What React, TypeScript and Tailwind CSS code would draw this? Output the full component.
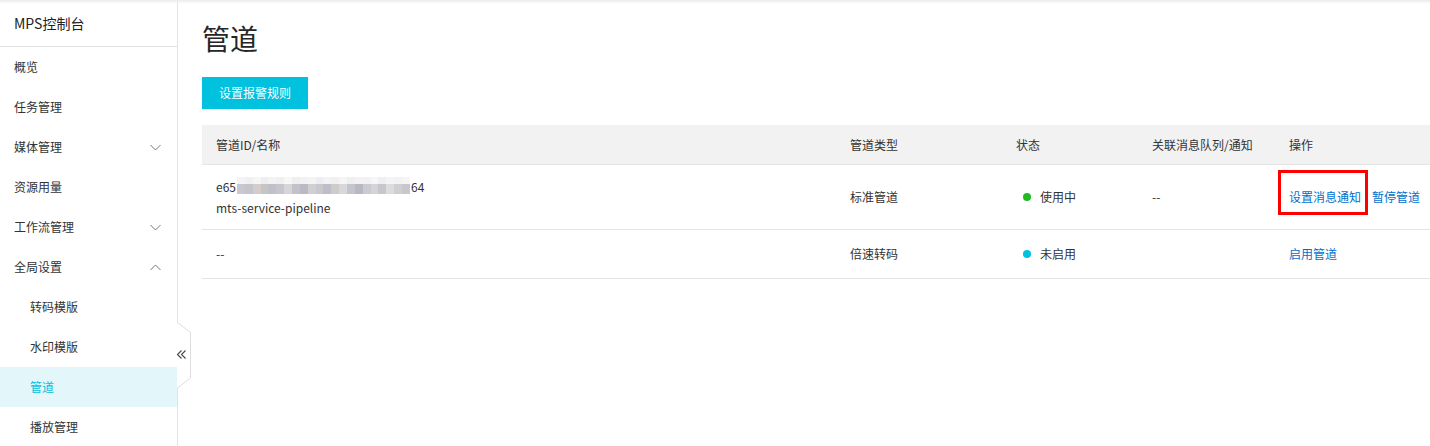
import React from "react";

const FONT = { fontFamily: '"Noto Sans CJK SC", "Noto Sans", sans-serif' };

function Chevron({ up }: { up?: boolean }) {
  return (
    <svg width="11" height="7" viewBox="0 0 11 7" className="text-[#777]">
      {up ? (
        <polyline points="0.5,6 5.5,1 10.5,6" fill="none" stroke="currentColor" strokeWidth="1" />
      ) : (
        <polyline points="0.5,1 5.5,6 10.5,1" fill="none" stroke="currentColor" strokeWidth="1" />
      )}
    </svg>
  );
}

type MenuItem = { label: string; sub?: boolean; chevron?: "up" | "down"; active?: boolean };

const menu: MenuItem[] = [
  { label: "概览" },
  { label: "任务管理" },
  { label: "媒体管理", chevron: "down" },
  { label: "资源用量" },
  { label: "工作流管理", chevron: "down" },
  { label: "全局设置", chevron: "up" },
  { label: "转码模版", sub: true },
  { label: "水印模版", sub: true },
  { label: "管道", sub: true, active: true },
  { label: "播放管理", sub: true },
];

const topBlocks = [
  "bg-[#f4f4f6]", "bg-[#f0f0f2]", "bg-[#f6f4f4]", "bg-[#eeeef1]", "bg-[#f3f3f3]", "bg-[#f0eff2]",
  "bg-[#f7f7f7]", "bg-[#efeff1]", "bg-[#f2f2f4]", "bg-[#f5f3f4]", "bg-[#eeeef0]", "bg-[#f3f3f5]",
  "bg-[#f0f0f0]", "bg-[#f5f5f7]", "bg-[#efeff2]", "bg-[#f3f1f1]", "bg-[#f1f1f3]", "bg-[#f6f6f6]",
  "bg-[#efeff1]", "bg-[#f4f4f4]", "bg-[#f2f2f4]", "bg-[#f5f5f5]",
];
const bottomBlocks = [
  "bg-[#c8c8d0]", "bg-[#c4c4cc]", "bg-[#d2cccc]", "bg-[#c9c4c4]", "bg-[#bfc0c8]", "bg-[#c6c6ce]",
  "bg-[#d6d6d8]", "bg-[#c2c2ca]", "bg-[#b9bac4]", "bg-[#d0d0d4]", "bg-[#c8c8ce]", "bg-[#bebec8]",
  "bg-[#cfcacb]", "bg-[#d8d8dc]", "bg-[#c4c4cc]", "bg-[#b8b8c2]", "bg-[#cacad0]", "bg-[#d4d4d6]",
  "bg-[#c6c6cc]", "bg-[#dcdcdc]", "bg-[#cfcfd3]", "bg-[#c8c8cc]",
];

function Blur() {
  return (
    <div className="flex flex-col w-[173px] h-[17px] -mt-[3px] mx-[1px]">
      <div className="flex h-[7px]">
        {topBlocks.map((c, i) => (
          <div key={i} className={`flex-1 ${c}`} />
        ))}
      </div>
      <div className="flex h-[10px]">
        {bottomBlocks.map((c, i) => (
          <div key={i} className={`flex-1 ${c}`} />
        ))}
      </div>
    </div>
  );
}

const gridCols = "grid grid-cols-[634px_166px_136px_137px_1fr]";

export default function App() {
  return (
    <div
      className="relative flex w-[1430px] h-[446px] overflow-hidden bg-white text-[#333] text-[12px]"
      style={FONT}
    >
      <div className="pointer-events-none absolute left-0 top-0 w-full h-[4px] bg-gradient-to-b from-[#ececec] to-transparent z-20" />

      {/* Sidebar */}
      <aside className="relative w-[178px] shrink-0 border-r border-[#e3e3e3] h-full">
        <div className="h-[47px] border-b border-[#e3e3e3] flex items-center pl-[14px] text-[14px] text-[#222]">
          MPS控制台
        </div>
        <nav className="flex flex-col">
          {menu.map((m) => (
            <div
              key={m.label}
              className={`h-[40px] flex items-center justify-between pr-[16px] ${
                m.sub ? "pl-[30px]" : "pl-[14px]"
              } ${m.active ? "bg-[#e3f7fb] text-[#00c1de]" : "text-[#333]"}`}
            >
              <span>{m.label}</span>
              {m.chevron && <Chevron up={m.chevron === "up"} />}
            </div>
          ))}
        </nav>

        {/* collapse tab */}
        <svg
          className="absolute left-[177px] top-[322px] z-10 overflow-visible"
          width="14"
          height="67"
          viewBox="0 0 14 67"
        >
          <polygon points="0,0.5 13.5,10.5 13.5,56 0,66" fill="#ffffff" />
          <polyline points="0.5,0.5 13.5,10.5 13.5,56 0.5,66" fill="none" stroke="#dedede" strokeWidth="1" />
          <polyline points="4.5,28.5 0.5,32.5 4.5,36.5" fill="none" stroke="#444" strokeWidth="1.1" />
          <polyline points="8.5,28.5 4.5,32.5 8.5,36.5" fill="none" stroke="#444" strokeWidth="1.1" />
        </svg>
      </aside>

      {/* Main */}
      <main className="flex-1 pl-[24px] pt-[24px]">
        <h1 className="text-[28px] leading-[28px] text-[#262626] font-normal">管道</h1>
        <button className="mt-[25px] h-[32px] w-[106px] bg-[#00c1de] text-white text-[12px] flex items-center justify-center">
          设置报警规则
        </button>

        <div className="mt-[16px]">
          <div className={`${gridCols} h-[40px] items-center bg-[#f2f2f2] border-b border-[#e5e5e5]`}>
            <div className="pl-[14px]">管道ID/名称</div>
            <div className="pl-[14px]">管道类型</div>
            <div className="pl-[14px]">状态</div>
            <div className="pl-[14px]">关联消息队列/通知</div>
            <div className="pl-[14px]">操作</div>
          </div>

          <div className={`${gridCols} h-[65px] items-center border-b border-[#e5e5e5]`}>
            <div className="pl-[14px] flex flex-col">
              <div className="flex items-center h-[21px]">
                <span>e65</span>
                <Blur />
                <span>64</span>
              </div>
              <div className="h-[21px] flex items-center">mts-service-pipeline</div>
            </div>
            <div className="pl-[14px]">标准管道</div>
            <div className="pl-[14px] flex items-center">
              <span className="ml-[7px] w-[8px] h-[8px] rounded-full bg-[#1fbb22]" />
              <span className="ml-[9px]">使用中</span>
            </div>
            <div className="pl-[14px]">--</div>
            <div className="pl-[14px] flex items-center text-[#0070cc]">
              <span className="relative leading-[20px]">
                设置消息通知
                <span className="absolute -left-[11px] -top-[17px] w-[90px] h-[45px] border-[3px] border-[#ff0000]" />
              </span>
              <span className="ml-[11px] leading-[20px]">暂停管道</span>
            </div>
          </div>

          <div className={`${gridCols} h-[49px] items-center border-b border-[#e5e5e5]`}>
            <div className="pl-[14px]">--</div>
            <div className="pl-[14px]">倍速转码</div>
            <div className="pl-[14px] flex items-center">
              <span className="ml-[7px] w-[8px] h-[8px] rounded-full bg-[#00c1de]" />
              <span className="ml-[9px]">未启用</span>
            </div>
            <div className="pl-[14px]"></div>
            <div className="pl-[14px] text-[#0070cc]">启用管道</div>
          </div>
        </div>
      </main>
    </div>
  );
}
